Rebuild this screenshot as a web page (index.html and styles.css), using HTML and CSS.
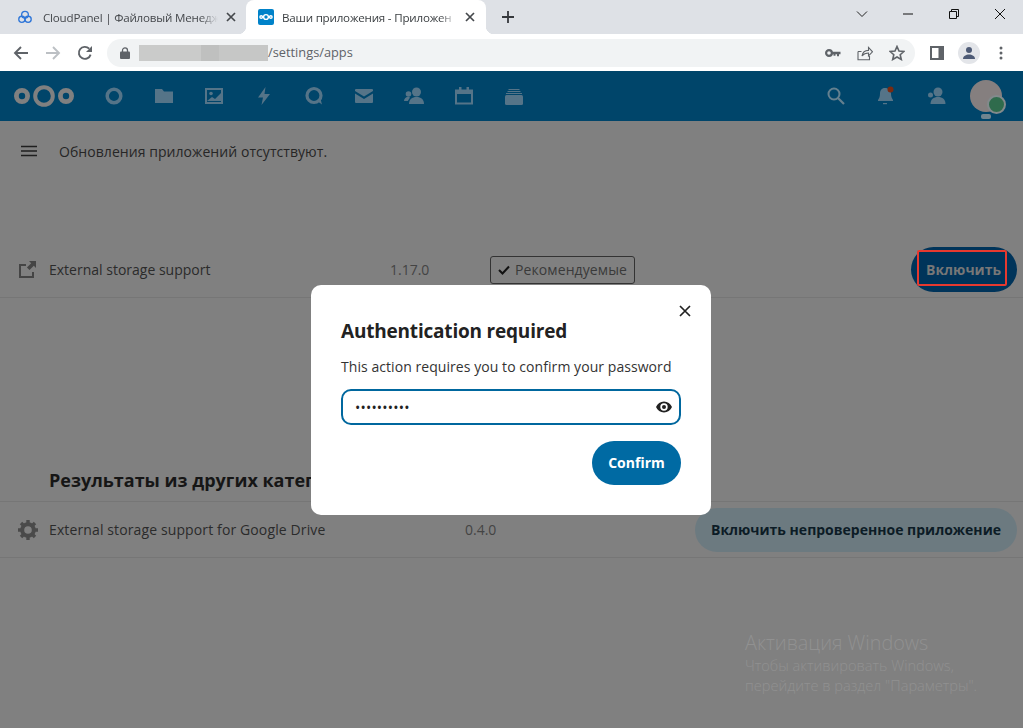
FILE: index.html
```html
<!DOCTYPE html>
<html lang="ru">
<head>
<meta charset="utf-8">
<title>Ваши приложения</title>
<link rel="stylesheet" href="styles.css">
</head>
<body>
<div class="tabstrip">
  <div class="tab tab-first">
    <svg class="fav fav-cloud" viewBox="0 0 18 18" width="14" height="14"><g fill="none" stroke="#2f76d8" stroke-width="1.700"><circle cx="9" cy="6" r="4.300"/><circle cx="5" cy="12" r="4"/><circle cx="13" cy="12" r="4"/></g></svg>
    <span class="tab-title">CloudPanel | Файловый Менедж</span>
    <svg class="tab-x" viewBox="0 0 10 10" width="10" height="10"><path d="M1 1l8 8M9 1l-8 8" stroke="#45484c" stroke-width="1.700"/></svg>
  </div>
  <div class="tab tab-active">
    <svg class="fav" viewBox="0 0 16 16" width="16" height="16"><rect width="16" height="16" rx="2" fill="#0082c9"/><g fill="none" stroke="#fff" stroke-width="1.400"><circle cx="8" cy="8" r="2.400"/><circle cx="3.200" cy="8" r="1.300"/><circle cx="12.800" cy="8" r="1.300"/></g></svg>
    <span class="tab-title">Ваши приложения - Приложен</span>
    <svg class="tab-x" viewBox="0 0 10 10" width="10" height="10"><path d="M1 1l8 8M9 1l-8 8" stroke="#45484c" stroke-width="1.700"/></svg>
  </div>
  <svg class="newtab" viewBox="0 0 12 12" width="12" height="12"><path d="M6 0v12M0 6h12" stroke="#35383c" stroke-width="1.800"/></svg>
  <div class="winctl">
    <svg viewBox="0 0 12 12" width="12" height="12"><path d="M1 3.500l5 5 5-5" fill="none" stroke="#222" stroke-width="1"/></svg>
    <svg viewBox="0 0 12 12" width="12" height="12"><path d="M1 6h10" stroke="#111" stroke-width="1"/></svg>
    <svg viewBox="0 0 12 12" width="12" height="12"><path d="M1.500 3.500h7v7h-7zM3.500 3.500v-2h7v7h-2" fill="none" stroke="#111" stroke-width="1"/></svg>
    <svg viewBox="0 0 12 12" width="12" height="12"><path d="M1 1l10 10M11 1L1 11" stroke="#111" stroke-width="1"/></svg>
  </div>
</div>

<div class="toolbar">
  <svg viewBox="0 0 16 16" width="16" height="16"><path d="M15 8H2M8 2L2 8l6 6" fill="none" stroke="#5f6368" stroke-width="1.900"/></svg>
  <svg viewBox="0 0 16 16" width="16" height="16"><path d="M1 8h13M8 2l6 6-6 6" fill="none" stroke="#bcc0c4" stroke-width="1.900"/></svg>
  <svg viewBox="0 0 16 16" width="16" height="16"><path d="M13.600 9.600A6 6 0 1 1 12.200 3.700" fill="none" stroke="#5f6368" stroke-width="1.900"/><path d="M15 1v6H9z" fill="#5f6368"/></svg>
  <div class="omnibox">
    <svg class="lock" viewBox="0 0 10 12" width="10" height="12"><path d="M2.500 5V3.400a2.500 2.500 0 0 1 5 0V5" fill="none" stroke="#5f6368" stroke-width="1.300"/><rect y="4.600" width="10" height="7.400" rx="1" fill="#5f6368"/></svg>
    <div class="url-blur"></div>
    <span class="url">/settings/apps</span>
    <div class="omni-actions">
      <svg viewBox="0 0 16 10" width="16" height="10"><circle cx="4" cy="5" r="2.900" fill="none" stroke="#5f6368" stroke-width="2.200"/><path d="M6.500 3.800h9v2.400h-1.500v2h-2v-2h-1.500v1.500h-2v-1.500h-2z" fill="#5f6368"/></svg>
      <svg viewBox="0 0 16 16" width="16" height="16"><path d="M1 6.500v8.300h11.500v-3.800M1 6.500h3.500M5 11c.6-3.800 3.200-5.600 6.500-5.600V2.500l4 4.300-4 4V8c-2.800 0-4.800.8-6.500 3z" fill="none" stroke="#5f6368" stroke-width="1.100"/></svg>
      <svg viewBox="0 0 16 16" width="16" height="16"><path d="M8 1.500l2 4.500 4.900.5-3.700 3.200 1.100 4.800L8 12l-4.300 2.500 1.100-4.800L1.100 6.500 6 6z" fill="none" stroke="#5f6368" stroke-width="1.600"/></svg>
    </div>
  </div>
  <svg class="panel-ic" viewBox="0 0 14 14" width="14" height="14"><rect x="1" y="1" width="12" height="12" fill="#fff" stroke="#5f6368" stroke-width="2"/><rect x="8.500" y="1" width="5" height="12" fill="#5f6368"/></svg>
  <div class="profile"><svg viewBox="0 0 14 14" width="14" height="14"><circle cx="7" cy="4" r="3" fill="#4d5a75"/><path d="M1 13c0-3 3-4.500 6-4.500s6 1.500 6 4.500z" fill="#4d5a75"/></svg></div>
  <svg class="dots" viewBox="0 0 4 14" width="4" height="14"><circle cx="2" cy="2" r="1.500" fill="#5f6368"/><circle cx="2" cy="7" r="1.500" fill="#5f6368"/><circle cx="2" cy="12" r="1.500" fill="#5f6368"/></svg>
</div>

<header class="nc-header">
  <svg class="nc-logo" viewBox="0 0 60 30" width="60" height="30"><g fill="none" stroke="#808080"><circle cx="30" cy="15" r="8.800" stroke-width="4"/><circle cx="8" cy="15" r="5.600" stroke-width="4.800"/><circle cx="52" cy="15" r="5.600" stroke-width="4.800"/></g></svg>
  <nav class="nc-nav">
    <svg viewBox="0 0 20 20" width="20" height="20"><circle cx="10" cy="10" r="6.800" fill="none" stroke="#557488" stroke-width="3.500"/></svg>
    <svg viewBox="0 0 20 20" width="20" height="20"><path d="M1 3h7l2 2.500h9V17H1z" fill="#557488"/></svg>
    <svg viewBox="0 0 20 20" width="20" height="20"><path fill-rule="evenodd" d="M1 2h18v16H1zM3 4v12h14V4z" fill="#557488"/><circle cx="7" cy="7.500" r="1.800" fill="#557488"/><path d="M3 15l5-4 3 2 6-6v8z" fill="#557488"/></svg>
    <svg viewBox="0 0 20 20" width="20" height="20"><path d="M11.500 1L4 11.500h5L7.500 19 16 8h-5.500z" fill="#557488"/></svg>
    <svg viewBox="0 0 20 20" width="20" height="20"><circle cx="10" cy="9.500" r="7" fill="none" stroke="#557488" stroke-width="3.200"/><path d="M13 15l5 3.500-1.500-5.500z" fill="#557488"/></svg>
    <svg viewBox="0 0 20 20" width="20" height="20"><path d="M2 3h16a1 1 0 0 1 1 1v1l-9 5.500L1 5V4a1 1 0 0 1 1-1zM1 7.500l9 5.500 9-5.500V16a1 1 0 0 1-1 1H2a1 1 0 0 1-1-1z" fill="#557488"/></svg>
    <svg viewBox="0 0 20 20" width="20" height="20"><circle cx="12.500" cy="6" r="4.500" fill="#557488"/><path d="M5 18c0-4.500 3-7 7.500-7s7.500 2.500 7.500 7z" fill="#557488"/><circle cx="4.500" cy="8" r="2.800" fill="#557488"/><path d="M0 15c0-2.500 2-4.200 4.500-4.200L6 11.500 3.800 15z" fill="#557488"/></svg>
    <svg viewBox="0 0 20 20" width="20" height="20"><path d="M2 4.500h16v13H2z" fill="none" stroke="#557488" stroke-width="2"/><path d="M2 4h16v4H2zM5 1h2.500v4H5zM12.500 1H15v4h-2.500z" fill="#557488"/></svg>
    <svg viewBox="0 0 20 20" width="20" height="20"><rect x="1" y="9" width="18" height="10" rx="1.500" fill="#557488"/><path d="M2 7h16v1H2zM3.500 5h13v1h-13zM4.500 3h11v1h-11z" fill="#557488"/></svg>
  </nav>
  <div class="nc-right">
    <svg viewBox="0 0 20 20" width="20" height="20"><circle cx="8" cy="8" r="5.500" fill="none" stroke="#64808f" stroke-width="2"/><path d="M12 12l6 6" stroke="#64808f" stroke-width="2.200"/></svg>
    <svg viewBox="0 0 20 20" width="20" height="20"><path d="M9 2c-3.500 0-5 2.500-5 5.500 0 3.500-1 5-2 6.500v1h15v-1c-1-1.500-2-3-2-6.500C15 4.500 12.500 2 9 2z" fill="#557488"/><path d="M7 17h4v1.200H7z" fill="#557488"/><circle cx="14.500" cy="3.500" r="3" fill="#7a2a10"/></svg>
    <svg viewBox="0 0 20 20" width="20" height="20"><circle cx="12" cy="6" r="4.500" fill="#557488"/><path d="M4.500 18c0-4.500 3-7 7.500-7s7.500 2.500 7.500 7z" fill="#557488"/><circle cx="4.500" cy="9" r="2.500" fill="#557488"/></svg>
    <div class="nc-avatar"></div>
  </div>
</header>

<main class="content">
  <div class="update-row">
    <svg class="menu-ic" viewBox="0 0 16 12" width="16" height="12"><path d="M0 1.500h16M0 6h16M0 10.500h16" stroke="#1f1f1f" stroke-width="1.700"/></svg>
    <span>Обновления приложений отсутствуют.</span>
  </div>

  <div class="app-row first-row">
    <svg class="row-ic" viewBox="0 0 18 17" width="18" height="17"><path d="M8 4H2v12h13v-5" fill="none" stroke="#454545" stroke-width="2"/><path d="M11 0h7v7l-2.200-2.200-4.300 4.300-2.600-2.600 4.300-4.300z" fill="#454545"/></svg>
    <span class="app-name">External storage support</span>
    <span class="app-version v1">1.17.0</span>
    <span class="badge">
      <svg viewBox="0 0 12 10" width="12" height="10"><path d="M1 5l3.500 3.500L11 1.500" fill="none" stroke="#111" stroke-width="2"/></svg>
      Рекомендуемые
    </span>
    <span class="btn-primary">Включить<span class="mark"></span></span>
  </div>

  <h2 class="section-title">Результаты из других категорий</h2>

  <div class="app-row second-row">
    <svg class="row-ic" viewBox="0 0 20 20" width="20" height="20"><circle cx="10" cy="10" r="5.800" fill="none" stroke="#4a4a4a" stroke-width="4"/><path d="M10 0v4M10 16v4M0 10h4M16 10h4M3 3l2.800 2.800M14.200 14.200L17 17M17 3l-2.800 2.800M5.800 14.200L3 17" stroke="#4a4a4a" stroke-width="3.400"/></svg>
    <span class="app-name">External storage support for Google Drive</span>
    <span class="app-version v2">0.4.0</span>
    <span class="btn-secondary">Включить непроверенное приложение</span>
  </div>
</main>

<div class="watermark">
  <div class="wm-title">Активация Windows</div>
  <div>Чтобы активировать Windows,</div>
  <div>перейдите в раздел "Параметры".</div>
</div>

<section class="modal">
  <svg class="modal-x" viewBox="0 0 12 12" width="12" height="12"><path d="M1 1l10 10M11 1L1 11" stroke="#222" stroke-width="1.700"/></svg>
  <h2 class="modal-title">Authentication required</h2>
  <p class="modal-text">This action requires you to confirm your password</p>
  <div class="pw-field">
    <span class="pw-dots">••••••••••</span>
    <svg viewBox="0 0 16 12" width="16" height="12"><path fill-rule="evenodd" d="M8 0.500c3.600 0 6.500 2.200 8 5.500-1.500 3.300-4.400 5.500-8 5.500S1.500 9.300 0 6c1.500-3.300 4.400-5.500 8-5.500zM8 2.300a3.700 3.700 0 1 0 0 7.400 3.700 3.700 0 0 0 0-7.400zM8 4a2 2 0 1 1 0 4 2 2 0 0 1 0-4z" fill="#222"/></svg>
  </div>
  <div class="modal-actions"><span class="btn-confirm">Confirm</span></div>
</section>
</body>
</html>
```
FILE: styles.css
```css
* { box-sizing: border-box; }
html, body { height: 100%; }
body {
  margin: 0;
  height: 728px;
  overflow: hidden;
  background: #808080;
  font-family: "Open Sans", "Noto Sans", sans-serif;
  color: #2a2a2a;
}

/* browser chrome */
.tabstrip {
  height: 34px;
  background: #dee1e6;
  display: flex;
  align-items: center;
}
.tab {
  position: relative;
  width: 240px;
  height: 34px;
  display: flex;
  align-items: center;
  padding: 0 11px 0 12px;
  gap: 8px;
  font-size: 11.6px;
  letter-spacing: -0.2px;
  color: #45484c;
}
.tab-first {
  width: 246px;
  padding: 0 10px 0 18px;
}
.fav-cloud { margin-right: 3px; }
.tab-active {
  background: #fff;
  border-radius: 8px 8px 0 0;
  color: #3c4043;
}
.tab-active::before,
.tab-active::after {
  content: "";
  position: absolute;
  bottom: 0;
  width: 8px;
  height: 8px;
}
.tab-active::before {
  left: -8px;
  background: radial-gradient(circle at 0 0, transparent 8px, #fff 8.5px);
}
.tab-active::after {
  right: -8px;
  background: radial-gradient(circle at 100% 0, transparent 8px, #fff 8.5px);
}
.fav { flex: none; }
.tab-title {
  flex: 1;
  min-width: 0;
  white-space: nowrap;
  -webkit-mask-image: linear-gradient(90deg, #000 90%, transparent);
  mask-image: linear-gradient(90deg, #000 90%, transparent);
}
.tab-x { flex: none; }
.newtab { margin-left: 16px; }
.winctl {
  margin-left: auto;
  align-self: flex-start;
  margin-top: 8px;
  display: flex;
  gap: 34px;
  padding-right: 17px;
}

.toolbar {
  height: 37px;
  background: #fff;
  display: flex;
  align-items: center;
  padding: 0 0 0 13px;
  gap: 16px;
}
.toolbar > svg { flex: none; }
.omnibox {
  width: 808px;
  height: 28px;
  margin-left: -2px;
  background: #f1f3f4;
  border-radius: 14px;
  display: flex;
  align-items: center;
  padding-left: 13px;
  font-size: 12.8px;
  color: #5f6368;
  flex: none;
}
.url { padding-bottom: 2px; }
.lock { flex: none; }
.url-blur {
  width: 129px;
  height: 16px;
  margin-left: 9px;
  background: linear-gradient(90deg, #cacbca 0 48%, #bfc0bf 48% 62%, #c6c7c6 62% 100%);
}
.omni-actions {
  margin-left: auto;
  display: flex;
  align-items: center;
  gap: 16px;
  padding-right: 10px;
}
.toolbar > .panel-ic { margin-left: -1px; }
.profile {
  width: 22px;
  height: 22px;
  margin-left: -2px;
  border-radius: 50%;
  background: #e3e5e9;
  display: flex;
  align-items: center;
  justify-content: center;
  flex: none;
}
.toolbar > .dots { margin-left: 3px; }

/* nextcloud header */
.nc-header {
  height: 50px;
  background: #00456a;
  display: flex;
  align-items: center;
  padding-left: 14px;
}
.nc-nav {
  display: flex;
  gap: 30px;
  margin-left: 30px;
}
.nc-right {
  margin-left: auto;
  display: flex;
  align-items: center;
  gap: 30px;
  padding-right: 21px;
}
.nc-avatar {
  position: relative;
  width: 32px;
  height: 32px;
  margin-left: -6px;
  border-radius: 50%;
  background: #857f7f;
}
.nc-avatar::before {
  content: "";
  position: absolute;
  right: -4px;
  bottom: -2px;
  width: 15px;
  height: 15px;
  border-radius: 50%;
  background: #2f6b4c;
  border: 2px solid #828a8c;
}
.nc-avatar::after {
  content: "";
  position: absolute;
  left: 11px;
  bottom: -7px;
  width: 10px;
  height: 5px;
  border-radius: 2px;
  background: #6f848f;
}

/* content */
.content { font-size: 14px; }
.update-row {
  height: 60px;
  display: flex;
  align-items: center;
  padding-left: 21px;
  color: #262626;
  letter-spacing: 0.06px;
}
.menu-ic { margin-right: 22px; }
.app-row {
  display: flex;
  align-items: center;
  padding: 0 6px 0 18px;
  border-bottom: 1px solid #767676;
  color: #2b2b2b;
}
.first-row {
  margin-top: 62px;
  height: 55px;
  padding-bottom: 1px;
}
.second-row { height: 56px; }
.row-ic { flex: none; }
.first-row .app-name { margin-left: 13px; width: 341px; }
.second-row .app-name {
  margin-left: 11px;
  width: 416px;
  letter-spacing: 0.12px;
}
.app-version { color: #444; }
.v1 { width: 100px; }
.v2 { flex: none; }
.badge {
  height: 28px;
  width: 145px;
  border: 1px solid #333;
  border-radius: 3px;
  display: flex;
  align-items: center;
  justify-content: center;
  gap: 5px;
  color: #3a3a3a;
  letter-spacing: 0.1px;
}
.btn-primary {
  position: relative;
  margin-left: auto;
  width: 106px;
  height: 45px;
  border-radius: 23px;
  background: #00345a;
  color: #777;
  font-weight: 700;
  display: flex;
  align-items: center;
  justify-content: flex-end;
  padding-right: 16px;
}
.mark {
  position: absolute;
  left: 6px;
  top: 3px;
  width: 90px;
  height: 36px;
  border: 2px solid #e6392f;
  border-radius: 2px;
}
.btn-secondary {
  margin-left: auto;
  height: 44px;
  padding: 0 16px;
  border-radius: 22px;
  background: #6c7a80;
  color: #0c1c26;
  font-weight: 700;
  display: flex;
  align-items: center;
}
.section-title {
  margin: 167px 0 0;
  height: 37px;
  padding-left: 49px;
  font-size: 18px;
  font-weight: 700;
  line-height: 30px;
  color: #161616;
  border-bottom: 1px solid #767676;
}

/* activation watermark */
.watermark {
  position: absolute;
  left: 745px;
  top: 631px;
  color: #919191;
  font-size: 14.6px;
  font-weight: 300;
  line-height: 20px;
}
.wm-title { font-size: 19.8px; line-height: 24px; }

/* modal */
.modal {
  position: absolute;
  left: 311px;
  top: 285px;
  width: 400px;
  height: 230px;
  background: #fff;
  border-radius: 10px;
  padding: 32px 30px 0;
}
.modal-x { position: absolute; right: 20px; top: 20px; }
.modal-title {
  margin: 0;
  font-size: 19px;
  line-height: 28px;
  font-weight: 700;
  letter-spacing: -0.2px;
  color: #222;
}
.modal-text {
  margin: 12px 0 0;
  font-size: 14px;
  line-height: 20px;
  letter-spacing: 0.06px;
  color: #333;
}
.pw-field {
  margin-top: 12px;
  height: 36px;
  border: 2px solid #00679e;
  border-radius: 10px;
  display: flex;
  align-items: center;
  justify-content: space-between;
  padding: 0 7px 0 12px;
}
.pw-dots {
  font-size: 14px;
  letter-spacing: 0.2px;
  padding-top: 1px;
  color: #222;
}
.modal-actions {
  display: flex;
  justify-content: flex-end;
  margin-top: 16px;
}
.btn-confirm {
  width: 89px;
  height: 44px;
  padding-bottom: 2px;
  border-radius: 22px;
  background: #006aa3;
  color: #fff;
  font-size: 14px;
  font-weight: 700;
  display: flex;
  align-items: center;
  justify-content: center;
}
```
